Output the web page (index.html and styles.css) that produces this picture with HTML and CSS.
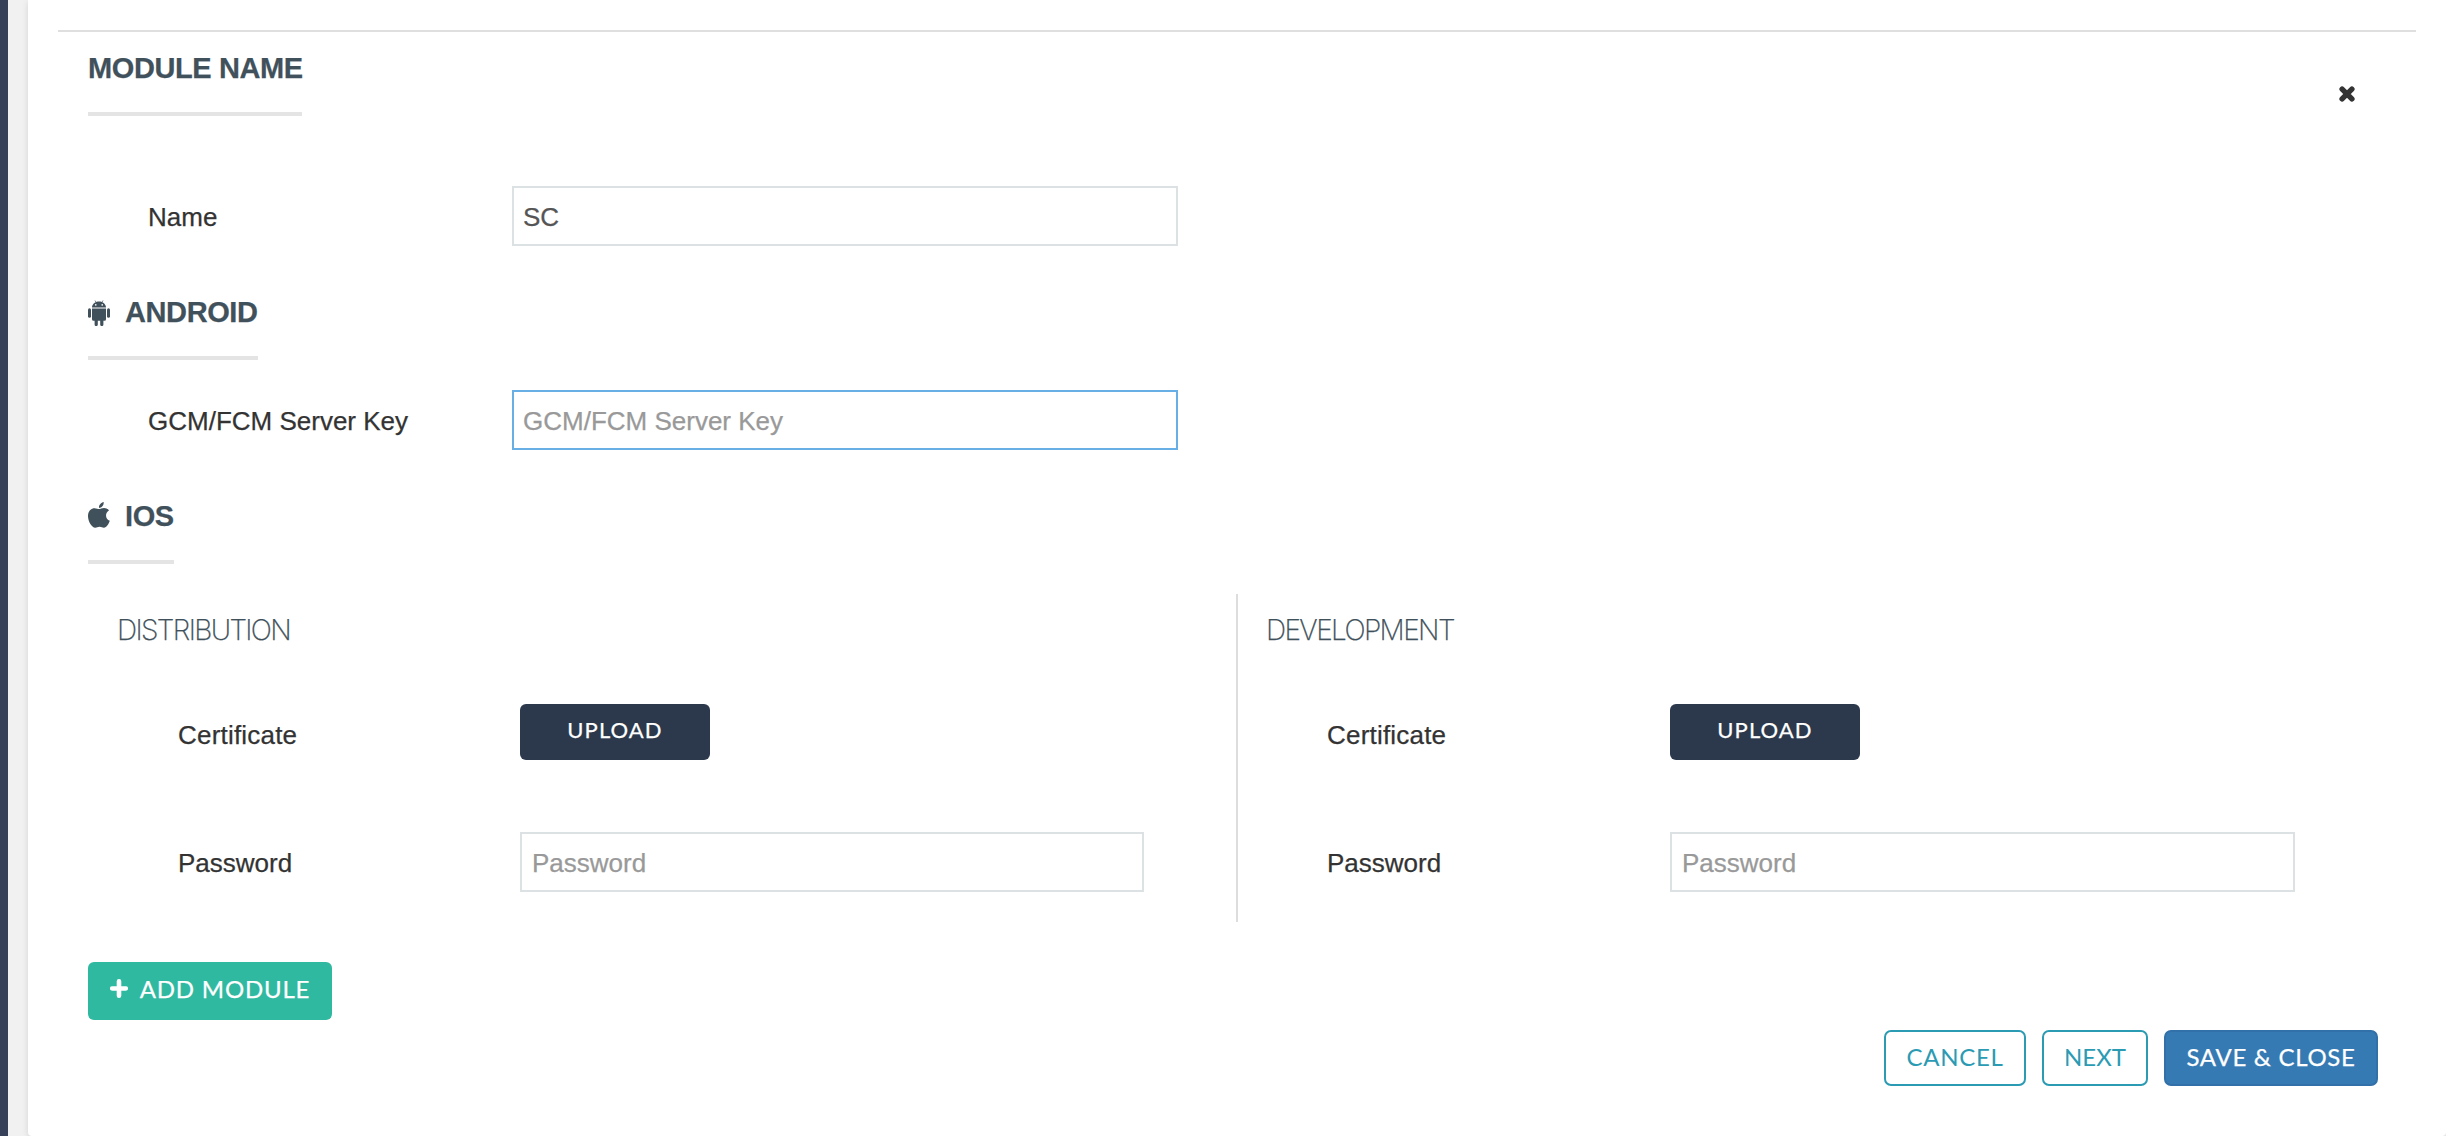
FILE: index.html
```html
<!DOCTYPE html>
<html lang="en">
<head>
<meta charset="utf-8">
<title>Module settings</title>
<link rel="stylesheet" href="styles.css">
</head>
<body>
<div class="sidebar"></div>
<main class="panel">
  <div class="rule"></div>
  <form class="content">
    <header class="top">
      <h2 class="heading heading-module">Module name</h2>
      <button type="button" class="close" aria-label="Close">
        <svg viewBox="0 0 16 16" width="16" height="16"><path d="M3.1 3.1 12.9 12.9M12.9 3.1 3.1 12.9" stroke="currentColor" stroke-width="5.4" stroke-linecap="round"/></svg>
      </button>
    </header>
    <div class="row row-name">
      <label class="label" for="name">Name</label>
      <input class="input" id="name" value="SC">
    </div>

    <h2 class="heading heading-android">
      <svg class="icon" viewBox="0 0 22 26" width="22" height="26">
        <path d="M7 .5 8.3 2.7M15 .5 13.7 2.7" stroke="currentColor" stroke-width=".7"/>
        <path fill="currentColor" fill-rule="evenodd" d="M4 7.5C4 4.2 7 1.500 11 1.500s7 2.700 7 6ZM7.800 4.100a.8.8 0 1 0 0 1.600.8.8 0 0 0 0-1.600ZM14.200 4.100a.8.8 0 1 0 0 1.600.8.8 0 0 0 0-1.600Z"/>
        <path fill="currentColor" d="M4 8.400H18V19.300Q18 20.800 16.500 20.800H15.400V24.500a1.500 1.500 0 0 1-3.200 0V20.800H9.800V24.500a1.500 1.500 0 0 1-3.200 0V20.800H5.500Q4 20.800 4 19.300Z"/>
        <rect x="0" y="8.200" width="3" height="9.600" rx="1.500" fill="currentColor"/>
        <rect x="19" y="8.200" width="3" height="9.600" rx="1.500" fill="currentColor"/>
      </svg>
      <span>Android</span>
    </h2>
    <div class="row row-key">
      <label class="label" for="key">GCM/FCM Server Key</label>
      <input class="input input-active" id="key" placeholder="GCM/FCM Server Key">
    </div>

    <h2 class="heading heading-ios">
      <svg class="icon" viewBox="0 0 22 26" width="22" height="26">
        <path fill="currentColor" d="M15.700 0C15.900 3.300 13.800 5.800 11 5.900 10.700 3.100 13 .5 15.700 0ZM11.200 7.100C12.300 7.100 13.700 5.900 16 5.900 18.100 5.900 19.900 6.900 21 8.500 16.600 11 17.300 17 21.800 18.700 20.900 21.500 18.600 25.600 15.900 25.700 14.300 25.700 13.600 24.800 11.600 24.800 9.600 24.800 8.800 25.700 7.300 25.700 3.500 25.600 0 19 0 14.200 0 9 3.100 6.200 6.600 6.200 8.500 6.200 10 7.100 11.200 7.100Z"/>
      </svg>
      <span>iOS</span>
    </h2>
    <div class="certs">
      <section class="cert cert-dist">
        <h3 class="subheading">Distribution</h3>
        <div class="field field-upload">
          <span class="label label-cert">Certificate</span>
          <button type="button" class="btn btn-upload">Upload</button>
        </div>
        <div class="field field-password">
          <label class="label" for="p1">Password</label>
          <input class="input" id="p1" placeholder="Password">
        </div>
      </section>
      <section class="cert cert-dev">
        <h3 class="subheading">Development</h3>
        <div class="field field-upload">
          <span class="label label-cert">Certificate</span>
          <button type="button" class="btn btn-upload">Upload</button>
        </div>
        <div class="field field-password">
          <label class="label" for="p2">Password</label>
          <input class="input" id="p2" placeholder="Password">
        </div>
      </section>
    </div>

    <button type="button" class="btn btn-add">
      <svg viewBox="0 0 18 19" width="18" height="19"><path d="M9 2.300V16.700M2.200 9.500H15.800" stroke="currentColor" stroke-width="4.600" stroke-linecap="round"/></svg>
      <span>Add module</span>
    </button>
    <footer class="actions">
      <button type="button" class="btn btn-outline btn-cancel">Cancel</button>
      <button type="button" class="btn btn-outline btn-next">Next</button>
      <button type="button" class="btn btn-save">Save &amp; close</button>
    </footer>
  </form>
</main>
</body>
</html>
```

FILE: styles.css
```css
* { box-sizing: border-box; }

body {
  margin: 0;
  height: 1136px;
  display: flex;
  overflow: hidden;
  background: #f1f1f1;
  color: #333;
  font: 26px "Liberation Sans", Arial, sans-serif;
  -webkit-text-stroke: .25px;
}

.sidebar { width: 8px; background: #364159; }

.panel {
  flex: 1;
  height: 1136px;
  margin-left: 20px;
  padding-top: 30px;
  background: #fff;
  border-radius: 0 0 4px 4px;
  box-shadow: 0 2px 6px rgba(0, 0, 0, .12);
}

.rule { height: 2px; margin: 0 30px; background: #dfdfdf; }

.content { padding: 16px 68px 0 60px; }

.top { display: flex; justify-content: space-between; }

.heading {
  display: flex;
  height: 68px;
  margin: 0;
  border-bottom: 4px solid #e4e4e4;
  color: #41515b;
  font-size: 29px;
  font-weight: 700;
  line-height: 41px;
  letter-spacing: -.4px;
  text-transform: uppercase;
  white-space: nowrap;
}
.heading-module { width: 214px; }
.heading-android { width: 170px; margin-top: 46px; }
.heading-ios { width: 86px; margin-top: 46px; }
.icon { flex: none; margin: 8px 15px 0 0; }
.heading-ios .icon { margin-top: 6px; }

.close {
  width: 16px;
  height: 16px;
  margin: 38px 23px 0 0;
  padding: 0;
  border: 0;
  background: none;
  color: #333;
}
.close svg { display: block; }

.row { display: grid; grid-template-columns: 364px 666px; padding-left: 60px; height: 60px; }
.row-name { margin-top: 70px; }
.row-key { margin-top: 30px; }
.label { line-height: 62px; white-space: nowrap; }
.label-cert { letter-spacing: .2px; }

.input {
  width: 100%;
  height: 60px;
  padding: 2px 9px 0;
  border: 2px solid #dce1e4;
  border-radius: 0;
  outline: 0;
  background: #fff;
  color: #555;
  font: inherit;
}
.input::placeholder { color: #999; opacity: 1; }
.input-active { border-color: #67afe5; }

.certs { display: grid; grid-template-columns: 1148px 1fr; height: 328px; margin-top: 30px; }
.cert { padding: 16px 0 0 29px; }
.cert-dist { padding-left: 30px; }
.cert-dev { border-left: 2px solid #ddd; }

.subheading {
  height: 94px;
  margin: 0 0 0 -1px;
  color: #41515b;
  font: 200 28px/40px Inter, "Liberation Sans", sans-serif;
  letter-spacing: -1.6px;
  text-transform: uppercase;
}

.field { display: grid; grid-template-columns: 342px 624px; padding-left: 60px; }
.cert-dev .field { grid-template-columns: 343px 625px; }
.field-upload { height: 56px; }
.field-password { margin-top: 72px; }
.field .input { padding-left: 10px; }

.btn {
  display: flex;
  align-items: center;
  justify-content: center;
  height: 56px;
  padding: 0 0 3px;
  border: 0;
  border-radius: 7px;
  color: #fff;
  font: 24px Lato, "Liberation Sans", sans-serif;
  letter-spacing: .7px;
  text-transform: uppercase;
  white-space: nowrap;
}
.btn-upload { width: 190px; padding-bottom: 5px; border-radius: 6px; background: #2c394d; font-size: 22px; letter-spacing: 1.1px; }
.btn-add { width: 244px; height: 58px; margin-top: 40px; padding-bottom: 5px; gap: 12px; border-radius: 6px; background: #2fb9a1; letter-spacing: .8px; }

.actions { display: flex; justify-content: flex-end; gap: 16px; margin-top: 10px; }
.btn-outline { border: 2px solid #2b9bb3; background: #fff; color: #2b9bb3; -webkit-text-stroke: 0; }
.btn-cancel { width: 142px; }
.btn-next { width: 106px; letter-spacing: 0; }
.btn-save { width: 214px; border: 2px solid #3170a8; background: #367ab4; }
```
